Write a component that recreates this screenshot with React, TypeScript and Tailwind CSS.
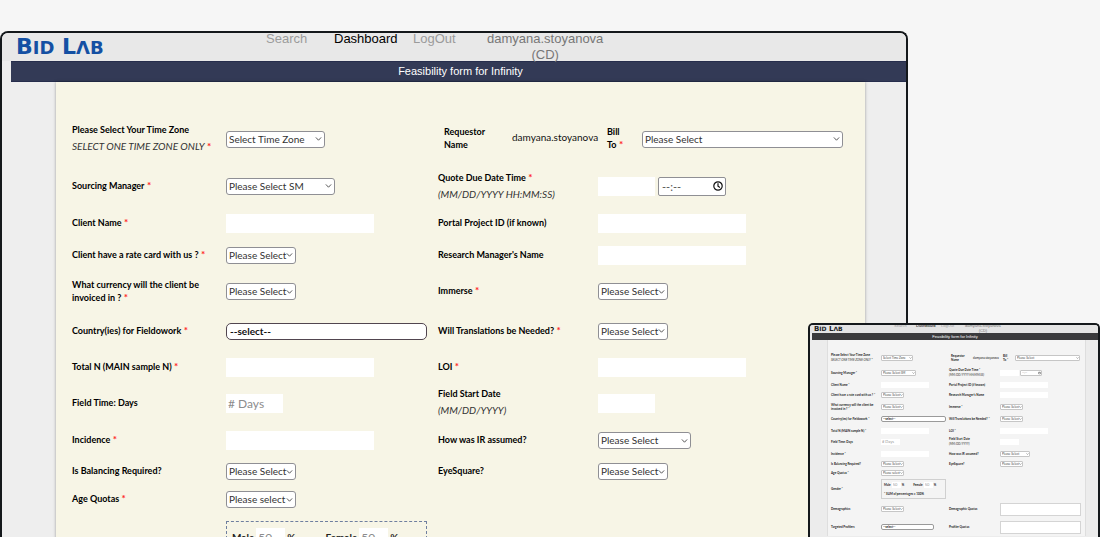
import React, { createContext, useContext, useId } from "react";

type Theme = {
  text: string;
  label: string;
  hint: string;
  select: string;
  chevron: string;
  multi: string;
  field: string;
  time: string;
  clock: string;
  row: string;
  pairRow: string;
  widths: Record<"zone" | "manager" | "choice" | "source" | "wide" | "target" | "text" | "short" | "time" | "tiny", string>;
};

const full: Theme = {
  text: "text-[10px] leading-[13px]",
  label: "pb-0.5 text-[9px] leading-[13px] font-bold text-black",
  hint: "leading-4",
  select: "h-[17px] rounded-[3px] border border-[#8f8f94] pl-[2px] text-[10px] leading-[15px] text-[#333]",
  chevron: "right-[3px] w-[7px]",
  multi: "h-[17px] rounded-[5px] border border-[#51454f] pl-[3px] text-[10px] leading-[15px] text-[#111]",
  field: "h-[19px] px-[2px] text-xs placeholder:text-[#8c8c8c]",
  time: "h-[19px] rounded-[2px] border border-[#8f8f94] pl-[3px] text-[11px] placeholder:text-[#555]",
  clock: "right-[3px] w-[10px]",
  row: "grid grid-cols-[154px_212px_160px_1fr] items-center",
  pairRow: "grid grid-cols-[68px_95px_35px_1fr] items-center pl-1.5",
  widths: {
    zone: "w-[99px]", manager: "w-[109px]", choice: "w-[70px]", source: "w-[93px]", wide: "w-[201px]", target: "w-[165px]",
    text: "w-[148px]", short: "w-[57px]", time: "w-[68px]", tiny: "w-[29px]",
  },
};

const mini: Theme = {
  text: "text-[3px] leading-[4px]",
  label: "text-[3px] leading-[4px] font-bold text-[#222]",
  hint: "leading-[5px]",
  select: "h-[6px] rounded-[1px] border border-[#c6c6c6] pl-px text-[3px] leading-[4px] text-[#444]",
  chevron: "right-px w-[3px]",
  multi: "h-[6px] rounded-[2px] border border-[#9a9a9a] pl-px text-[3px] leading-[4px] text-[#222]",
  field: "h-[6px] px-px text-[4px] placeholder:text-[#999]",
  time: "h-[6px] rounded-[1px] border border-[#c6c6c6] pl-px text-[3px] placeholder:text-[#888]",
  clock: "right-px w-[3px]",
  row: "grid grid-cols-[50px_68px_51px_1fr] items-center",
  pairRow: "grid grid-cols-[22px_30px_12px_1fr] items-center pl-0.5",
  widths: {
    zone: "w-[32px]", manager: "w-[35px]", choice: "w-[23px]", source: "w-[30px]", wide: "w-[65px]", target: "w-[53px]",
    text: "w-[48px]", short: "w-[19px]", time: "w-[22px]", tiny: "w-[9px]",
  },
};

const ThemeContext = createContext<Theme>(full);
const useTheme = () => useContext(ThemeContext);
type Width = keyof Theme["widths"];

const Star = () => {
  const t = useTheme();
  return <span className={t === mini ? "text-[#333]" : "text-[10px] font-bold text-[#ff1f1f]"}> *</span>;
};

function Label({ id, children, required, hint, hintRequired }: {
  id: string; children: React.ReactNode; required?: boolean; hint?: string; hintRequired?: boolean;
}) {
  const t = useTheme();
  return (
    <label htmlFor={id} className={`block ${t.label}`}>
      <span className={hint ? t.hint : ""}>{children}{required && <Star />}</span>
      {hint && (
        <span className={`block ${t === mini ? "" : "text-[10px]"} ${t.hint}`}>
          <i className="font-normal text-[#333]">{hint}</i>{hintRequired && <Star />}
        </span>
      )}
    </label>
  );
}

function Select({ id, w, children }: { id: string; w: Width; children: string }) {
  const t = useTheme();
  return (
    <span className={`relative block ${t.widths[w]}`}>
      <select id={id} className={`block w-full appearance-none bg-white ${t.select}`}>
        <option>{children}</option>
      </select>
      <svg viewBox="0 0 8 6" className={`pointer-events-none absolute top-1/2 -translate-y-1/2 ${t.chevron}`} fill="none" stroke="#444">
        <path d="M1 1.2 4 4.4 7 1.2" />
      </svg>
    </span>
  );
}

function MultiSelect({ id, w = "wide" }: { id: string; w?: Width }) {
  const t = useTheme();
  return (
    <select id={id} className={`block appearance-none bg-white font-bold ${t.widths[w]} ${t.multi}`}>
      <option>--select--</option>
    </select>
  );
}

function Field({ id, w, placeholder, label }: { id?: string; w: Width; placeholder?: string; label?: string }) {
  const t = useTheme();
  return (
    <input id={id} aria-label={label} type="text" placeholder={placeholder} className={`block bg-white ${t.widths[w]} ${t.field}`} />
  );
}

function TimeField() {
  const t = useTheme();
  return (
    <span className={`relative block ${t.widths.time}`}>
      <input type="text" aria-label="Quote due time" placeholder="--:--" className={`block w-full bg-white ${t.time}`} />
      <svg viewBox="0 0 10 10" className={`pointer-events-none absolute top-1/2 -translate-y-1/2 ${t.clock}`} fill="none" stroke="#111" strokeWidth="1.2">
        <circle cx="5" cy="5" r="4.2" />
        <path d="M5 2.2V5.2L7 6.4" />
      </svg>
    </span>
  );
}

function Gender({ id }: { id: string }) {
  const t = useTheme();
  const small = t === mini;
  const label = `font-bold text-[#222] ${t.text}`;
  return (
    <div role="group" aria-label="Gender" className={`${t.widths.wide} ${small ? "h-5 border border-[#d0d0d0] px-0.5 pt-[2px]" : "h-[58px] border border-dashed border-[#6f7f9f] px-[5px] pt-1.5"}`}>
      <div className={`flex items-center ${small ? "gap-px" : "gap-0.5"}`}>
        <label htmlFor={id} className={label}>Male</label>
        <Field id={id} w="tiny" placeholder="50" />
        <span className={label}>%</span>
        <label htmlFor={`${id}f`} className={`${label} ${small ? "ml-2" : "ml-7"}`}>Female</label>
        <Field id={`${id}f`} w="tiny" placeholder="50" />
        <span className={label}>%</span>
      </div>
      {small && <p className={`mt-1 ${label}`}>* SUM of percentages = 100%</p>}
    </div>
  );
}

function Row({ h, children }: { h: [string, string]; children: React.ReactNode }) {
  const t = useTheme();
  return <div className={`${t.row} ${t === mini ? h[1] : h[0]}`}>{children}</div>;
}

function FeasibilityForm() {
  const t = useTheme();
  const small = t === mini;
  const id = useId();
  const k = (name: string) => id + name;
  return (
    <form className="font-[Lato,sans-serif]">
      <Row h={["h-12", "h-[15px]"]}>
        <Label id={k("zone")} hint="SELECT ONE TIME ZONE ONLY" hintRequired>Please Select Your Time Zone</Label>
        <Select id={k("zone")} w="zone">Select Time Zone</Select>
        <div className={`col-span-2 ${t.pairRow}`}>
          <span className={t.label}>Requestor<br />Name</span>
          <span className={`${t.text} ${small ? "" : "pb-1"} text-[#111]`}>damyana.stoyanova</span>
          <Label id={k("bill")} required>Bill<br />To</Label>
          <Select id={k("bill")} w="wide">Please Select</Select>
        </div>
      </Row>
      <Row h={["h-[46px]", "h-[15px]"]}>
        <Label id={k("sm")} required>Sourcing Manager</Label>
        <Select id={k("sm")} w="manager">Please Select SM</Select>
        <Label id={k("due")} required hint="(MM/DD/YYYY HH:MM:SS)">Quote Due Date Time</Label>
        <div className={`flex ${small ? "gap-px" : "gap-[3px]"}`}>
          <Field id={k("due")} w="short" />
          <TimeField />
        </div>
      </Row>
      <Row h={["h-[29px]", "h-[9px]"]}>
        <Label id={k("client")} required>Client Name</Label>
        <Field id={k("client")} w="text" />
        <Label id={k("portal")}>Portal Project ID (if known)</Label>
        <Field id={k("portal")} w="text" />
      </Row>
      <Row h={["h-[34px]", "h-[11px]"]}>
        <Label id={k("rate")} required>Client have a rate card with us ?</Label>
        <Select id={k("rate")} w="choice">Please Select</Select>
        <Label id={k("research")}>Research Manager's Name</Label>
        <Field id={k("research")} w="text" />
      </Row>
      <Row h={["h-[39px]", "h-[13px]"]}>
        <Label id={k("currency")} required>What currency will the client be<br />invoiced in ?</Label>
        <Select id={k("currency")} w="choice">Please Select</Select>
        <Label id={k("immerse")} required>Immerse</Label>
        <Select id={k("immerse")} w="choice">Please Select</Select>
      </Row>
      <Row h={["h-10", "h-3"]}>
        <Label id={k("country")} required>Country(ies) for Fieldowork</Label>
        <MultiSelect id={k("country")} />
        <Label id={k("trans")} required>Will Translations be Needed?</Label>
        <Select id={k("trans")} w="choice">Please Select</Select>
      </Row>
      <Row h={["h-8", "h-[11px]"]}>
        <Label id={k("total")} required>Total N (MAIN sample N)</Label>
        <Field id={k("total")} w="text" />
        <Label id={k("loi")} required>LOI</Label>
        <Field id={k("loi")} w="text" />
      </Row>
      <Row h={["h-10", "h-3"]}>
        <Label id={k("days")}>Field Time: Days</Label>
        <Field id={k("days")} w="short" placeholder="# Days" />
        <Label id={k("start")} hint="(MM/DD/YYYY)">Field Start Date</Label>
        <Field id={k("start")} w="short" />
      </Row>
      <Row h={["h-[35px]", "h-3"]}>
        <Label id={k("incidence")} required>Incidence</Label>
        <Field id={k("incidence")} w="text" />
        <Label id={k("ir")}>How was IR assumed?</Label>
        <Select id={k("ir")} w="source">Please Select</Select>
      </Row>
      <Row h={["h-[27px]", "h-2"]}>
        <Label id={k("balance")}>Is Balancing Required?</Label>
        <Select id={k("balance")} w="choice">Please Select</Select>
        <Label id={k("eye")}>EyeSquare?</Label>
        <Select id={k("eye")} w="choice">Please Select</Select>
      </Row>
      <Row h={["h-[29px]", "h-2.5"]}>
        <Label id={k("age")} required>Age Quotas</Label>
        <Select id={k("age")} w="choice">Please select</Select>
      </Row>
      <Row h={["h-[72px]", "h-[22px]"]}>
        <div>{small && <Label id={k("gender")} required>Gender</Label>}</div>
        <Gender id={k("gender")} />
      </Row>
      {small && (
        <>
          <Row h={["h-14", "h-[18px]"]}>
            <Label id={k("demo")}>Demographics</Label>
            <Select id={k("demo")} w="choice">Please Select</Select>
            <Label id={k("dq")}>Demographic Quotas</Label>
            <textarea id={k("dq")} className="block h-[13px] w-[81px] resize-none border border-[#d4d4d4] bg-white" />
          </Row>
          <Row h={["h-14", "h-[18px]"]}>
            <Label id={k("target")}>Targeted Profilers</Label>
            <MultiSelect id={k("target")} w="target" />
            <Label id={k("pq")}>Profiler Quotas</Label>
            <textarea id={k("pq")} className="block h-[13px] w-[81px] resize-none border border-[#d4d4d4] bg-white" />
          </Row>
        </>
      )}
    </form>
  );
}

function Logo({ className, small }: { className: string; small: string }) {
  return (
    <a href="#" aria-label="Bid Lab" className={`font-['DejaVu_Sans',sans-serif] font-bold ${className}`}>
      B<span className={small}>ID</span> L<span className={small}>ΛB</span>
    </a>
  );
}

export default function App() {
  return (
    <div className="relative h-screen overflow-hidden bg-[#f6f6f6] pt-[31px]">
      <main className="mr-48 overflow-hidden rounded-t-lg border-2 border-b-0 border-[#14181b] bg-[#eeeeee]">
        <header className="flex h-7 items-start bg-[#e8e8e8] font-['Liberation_Sans',sans-serif] text-[13px] leading-4">
          <Logo className="ml-[14px] w-[250px] text-[22px] leading-[28px] text-[#1450a3]" small="text-[18px]" />
          <nav className="-mt-0.5 flex text-[#9b9b9b]">
            <a href="#" className="w-[68px]">Search</a>
            <a href="#" className="w-[79px] text-black">Dashboard</a>
            <a href="#" className="w-[74px]">LogOut</a>
            <span className="text-center text-[#777]">damyana.stoyanova<br />(CD)</span>
          </nav>
        </header>
        <h1 className="ml-[9px] h-[21px] border-y border-[#262d4c] bg-[#333a56] pl-1 text-center font-['Liberation_Sans',sans-serif] text-[11px] leading-[19px] text-white">
          Feasibility form for Infinity
        </h1>
        <section className="mr-[41px] ml-[54px] bg-[#f7f5e6] pt-[33px] pl-4 shadow-[0_0_3px_rgba(0,0,0,0.35)]">
          <FeasibilityForm />
        </section>
      </main>

      <aside className="absolute top-[323px] right-0 bottom-0 w-[292px] overflow-hidden rounded-t-[5px] border-2 border-b-0 border-[#14181b] bg-[#ececec]">
        <ThemeContext.Provider value={mini}>
          <header className="flex h-2 items-start bg-[#e4e4e4] font-['Liberation_Sans',sans-serif] text-[4px] leading-[5px]">
            <Logo className="ml-1 w-20 text-[7px] leading-[7px] text-[#222]" small="text-[6px]" />
            <nav className="-mt-0.5 flex text-[#9b9b9b]">
              <a href="#" className="w-[22px]">Search</a>
              <a href="#" className="w-[25px] text-black">Dashboard</a>
              <a href="#" className="w-[24px]">LogOut</a>
              <span className="text-center text-[#777]">damyana.stoyanova<br />(CD)</span>
            </nav>
          </header>
          <h2 className="ml-0.5 h-[7px] bg-[#3a3a3c] text-center font-['Liberation_Sans',sans-serif] text-[4px] leading-[7px] text-white">
            Feasibility form for Infinity
          </h2>
          <section className="mr-3 ml-[17px] border-x border-[#dedede] bg-[#f4f4f4] pt-2.5 pl-[3px]">
            <FeasibilityForm />
          </section>
        </ThemeContext.Provider>
      </aside>
    </div>
  );
}
